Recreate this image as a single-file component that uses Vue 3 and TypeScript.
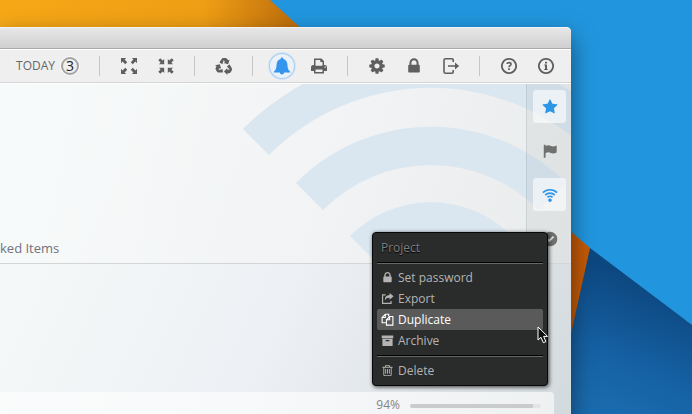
<script setup lang="ts">
import { ref } from 'vue'

interface Shape {
  d: string
  stroke?: number
  transform?: string
}

interface Icon {
  box: number
  shapes: Shape[]
}

interface Action {
  icon: string
  label: string
}

const outward = 'M1 1h5.200L4.600 2.600 7.200 5.200 5.200 7.200 2.600 4.600 1 6.200z'
const inward = 'M7.200 7.200H2L3.600 5.600 1.300 3.300 3.300 1.300 5.600 3.600 7.200 2z'
const recycleArm =
  'M4.4 5.6 6.6 2Q7.2 1 8.4 1H10.6Q11.6 1 12.2 1.9L13.1 3.3 14.6 2.5 13.2 7.2 8.6 6.1 10 5.2 8.7 3.1 7.4 7.3z'

const fourWays = (d: string): Shape[] =>
  [0, 90, 180, 270].map((angle) => ({ d, transform: `rotate(${angle} 9 9)` }))

const icons: Record<string, Icon> = {
  expand: { box: 18, shapes: fourWays(outward) },
  collapse: { box: 18, shapes: fourWays(inward) },
  recycle: {
    box: 18,
    shapes: [0, 120, 240].map((angle) => ({ d: recycleArm, transform: `rotate(${angle} 9 9.6)` })),
  },
  bell: {
    box: 18,
    shapes: [
      {
        d: 'M9 .6c.8 0 1.3.5 1.3 1.3 2.7.6 4 2.8 4.1 5.6.1 4 .9 5.600 2.800 7.200v.8H.8v-.8c1.900-1.600 2.700-3.200 2.800-7.200.1-2.800 1.400-5 4.100-5.600C7.700 1.100 8.200.6 9 .6zM6.900 15.500h4.200a2.100 2.100 0 0 1-4.200 0z',
      },
    ],
  },
  print: {
    box: 18,
    shapes: [
      {
        d: 'M4 1.500h7.500L14 4v4h.8A2.200 2.200 0 0 1 17 10.200V14h-3v2.500H4V14H1v-3.800A2.200 2.200 0 0 1 3.200 8H4zM5.500 3v5.800h7V5H10.300V3zM5.500 12.500V15h7v-2.500zM14.500 9.500v1.200h1.200V9.500z',
      },
    ],
  },
  cog: {
    box: 1792,
    shapes: [
      {
        d: 'M1152 896q0-106-75-181t-181-75-181 75-75 181 75 181 181 75 181-75 75-181zm512-109v222q0 12-8 23t-20 13l-185 28q-19 54-39 91 35 50 107 138 10 12 10 25t-9 23q-27 37-99 108t-94 71q-12 0-26-9l-138-108q-44 23-91 38-16 136-29 186-7 28-36 28h-222q-14 0-24.500-8.500t-11.500-21.500l-28-184q-49-16-90-37l-141 107q-10 9-25 9-14 0-25-11-126-114-165-168-7-10-7-23 0-12 8-23 15-21 51-66.500t54-70.500q-27-50-41-99l-183-27q-13-2-21-12.500t-8-23.500v-222q0-12 8-23t19-13l186-28q14-46 39-92-40-57-107-138-10-12-10-24 0-10 9-23 26-36 98.500-107.500t94.500-71.500q13 0 26 10l138 107q44-23 91-38 16-136 29-186 7-28 36-28h222q14 0 24.500 8.500t11.500 21.500l28 184q49 16 90 37l142-107q9-9 24-9 13 0 25 10 129 119 165 170 7 8 7 22 0 12-8 23-15 21-51 66.500t-54 70.500q26 50 41 98l183 28q13 2 21 12.500t8 23.500z',
      },
    ],
  },
  lock: {
    box: 1792,
    shapes: [
      {
        d: 'M640 768h512v-192q0-106-75-181t-181-75-181 75-75 181v192zm832 96v576q0 40-28 68t-68 28h-960q-40 0-68-28t-28-68v-576q0-40 28-68t68-28h32v-192q0-184 132-316t316-132 316 132 132 316v192h32q40 0 68 28t28 68z',
      },
    ],
  },
  exit: {
    box: 18,
    shapes: [
      { d: 'M11.200 5V3Q11.200 1.800 10 1.800H3.500Q2 1.800 2 3.300V14.700Q2 16.200 3.500 16.200H10Q11.200 16.200 11.200 15V13', stroke: 1.6 },
      { d: 'M6 8.200h7V5.400L17.200 9 13 12.600V9.800H6z' },
    ],
  },
  help: {
    box: 18,
    shapes: [
      { d: 'M9 1.900a7.100 7.100 0 1 0 .01 0z', stroke: 1.8 },
      { d: 'M6.800 6.800Q7.300 5.600 9 5.600q2 0 2 1.600 0 1-1.100 1.600-.9.500-.9 1.500', stroke: 1.6 },
      { d: 'M8.100 11.300h1.800V13H8.100z' },
    ],
  },
  info: {
    box: 18,
    shapes: [
      { d: 'M9 1.900a7.100 7.100 0 1 0 .01 0z', stroke: 1.8 },
      { d: 'M8 4.800h2v1.700H8zM7.300 7.500H10v4.400h.8V13H7.200v-1.100H8V8.600h-.7z' },
    ],
  },
  star: {
    box: 1792,
    shapes: [
      {
        d: 'M1728 647q0 22-26 48l-363 354 86 500q1 7 1 20 0 21-10.500 35.500t-30.500 14.500q-19 0-40-12l-449-236-449 236q-22 12-40 12-21 0-31.500-14.500t-10.500-35.500q0-6 2-20l86-500-364-354q-25-27-25-48 0-37 56-46l502-73 225-455q19-41 49-41t49 41l225 455 502 73q56 9 56 46z',
      },
    ],
  },
  flag: {
    box: 18,
    shapes: [{ d: 'M2 2h2v1.300C6 2.200 8 2.300 9.600 3.200c2 1 4 .9 6.900-.4v7.800c-2.600 1.400-5.100 1.400-7.100.5-1.800-.9-3.400-.9-5.400.3V16.500H2z' }],
  },
  wifi: {
    box: 18,
    shapes: [
      { d: 'M1 6.400a11.300 11.300 0 0 1 16 0', stroke: 1.9 },
      { d: 'M3.600 9.100a7.600 7.600 0 0 1 10.800 0', stroke: 1.9 },
      { d: 'M6.200 11.700a4 4 0 0 1 5.600 0', stroke: 1.9 },
      { d: 'M9 12.800a2 2 0 1 0 .01 0z' },
    ],
  },
  check: {
    box: 18,
    shapes: [{ d: 'M9 .8a8.200 8.200 0 1 0 .01 0zM4.500 9.200 6 7.700 8 9.700 12.300 5.500 13.800 7 8 12.700z' }],
  },
  share: {
    box: 14,
    shapes: [
      { d: 'M5 3H1.700V12.300H10.800V9.600', stroke: 1.3 },
      { d: 'M9.200 1 13.600 4.700 9.200 8.300V6.200C6.800 6.100 5.300 6.800 4.300 9 4 5.600 5.800 3.300 9.200 3.200z' },
    ],
  },
  copy: {
    box: 14,
    shapes: [
      { d: 'M5.600 10.500H1.200V4.800L4.600 1.300H8.300V3.800M4.600 1.300V4.800H1.200', stroke: 1.2 },
      { d: 'M9.300 3.800H12.800V13H5.900V7.300zM9.300 3.800V7.300H5.900', stroke: 1.2 },
    ],
  },
  archive: {
    box: 14,
    shapes: [{ d: 'M.8 1.500h12.400v3H.8zM1.500 5.200h11V12.800h-11zM5 6.400v1.400h4V6.400z' }],
  },
  trash: {
    box: 1792,
    shapes: [
      {
        d: 'M704 736v576q0 14-9 23t-23 9h-64q-14 0-23-9t-9-23v-576q0-14 9-23t23-9h64q14 0 23 9t9 23zm256 0v576q0 14-9 23t-23 9h-64q-14 0-23-9t-9-23v-576q0-14 9-23t23-9h64q14 0 23 9t9 23zm256 0v576q0 14-9 23t-23 9h-64q-14 0-23-9t-9-23v-576q0-14 9-23t23-9h64q14 0 23 9t9 23zm128 724v-948h-896v948q0 22 7 40.500t14.500 27 10.500 8.500h832q3 0 10.500-8.500t14.500-27 7-40.500zm-672-1076h448l-48-117q-7-9-17-11h-317q-10 2-17 11zm928 32v64q0 14-9 23t-23 9h-96v948q0 83-47 143.500t-113 60.500h-832q-66 0-113-58.500t-47-141.500v-952h-96q-14 0-23-9t-9-23v-64q0-14 9-23t23-9h309l70-167q15-37 54-63t79-26h320q40 0 79 26t54 63l70 167h309q14 0 23 9t9 23z',
      },
    ],
  },
}

const toolbar: Action[][] = [
  [
    { icon: 'expand', label: 'Expand' },
    { icon: 'collapse', label: 'Collapse' },
  ],
  [{ icon: 'recycle', label: 'Recycle' }],
  [
    { icon: 'bell', label: 'Notifications' },
    { icon: 'print', label: 'Print' },
  ],
  [
    { icon: 'cog', label: 'Settings' },
    { icon: 'lock', label: 'Lock' },
    { icon: 'exit', label: 'Sign out' },
  ],
  [
    { icon: 'help', label: 'Help' },
    { icon: 'info', label: 'About' },
  ],
]

const markers: Action[] = [
  { icon: 'star', label: 'Favourite' },
  { icon: 'flag', label: 'Flag' },
  { icon: 'wifi', label: 'Shared' },
  { icon: 'check', label: 'Done' },
]

const menu: Action[][] = [
  [
    { icon: 'lock', label: 'Set password' },
    { icon: 'share', label: 'Export' },
    { icon: 'copy', label: 'Duplicate' },
    { icon: 'archive', label: 'Archive' },
  ],
  [{ icon: 'trash', label: 'Delete' }],
]

const notifying = ref(true)
const active = ref<string[]>(['star', 'wifi'])
const highlighted = ref('Duplicate')
const progress = ref(94)

function toggleMarker(name: string) {
  active.value = active.value.includes(name)
    ? active.value.filter((item) => item !== name)
    : [...active.value, name]
}
</script>

<template>
  <div class="desktop">
    <svg class="wallpaper" viewBox="0 0 692 414" preserveAspectRatio="xMidYMid slice" aria-hidden="true">
      <defs>
        <linearGradient id="amber" gradientUnits="userSpaceOnUse" x1="0" y1="0" x2="290" y2="30">
          <stop offset="0" stop-color="#f6a817" />
          <stop offset=".7" stop-color="#ee9e14" />
          <stop offset="1" stop-color="#c0700c" />
        </linearGradient>
        <linearGradient id="deep" gradientUnits="userSpaceOnUse" x1="640" y1="280" x2="590" y2="400">
          <stop offset="0" stop-color="#0d4780" />
          <stop offset=".6" stop-color="#1560a2" />
          <stop offset="1" stop-color="#1a6bae" />
        </linearGradient>
      </defs>
      <rect width="692" height="414" fill="#2196de" />
      <path d="M0 0H270L360 82H0z" fill="url(#amber)" />
      <path d="M590 248 692 325V414H560V248z" fill="url(#deep)" />
      <path d="M540 205 590 248 571 334 540 414z" fill="#c35a08" />
    </svg>

    <main class="window">
      <div class="titlebar"></div>

      <nav class="toolbar" aria-label="Project tools">
        <button class="today" type="button">
          TODAY
          <span class="count">3</span>
        </button>
        <template v-for="(group, index) in toolbar" :key="index">
          <span class="divider"></span>
          <button
            v-for="item in group"
            :key="item.icon"
            class="tool"
            :class="{ ringing: item.icon === 'bell' && notifying }"
            type="button"
            :aria-label="item.label"
          >
            <svg class="icon" :viewBox="`0 0 ${icons[item.icon].box} ${icons[item.icon].box}`">
              <path
                v-for="(shape, i) in icons[item.icon].shapes"
                :key="i"
                :d="shape.d"
                :transform="shape.transform"
                :class="{ line: shape.stroke }"
                :stroke-width="shape.stroke"
              />
            </svg>
          </button>
        </template>
      </nav>

      <section class="header">
        <svg class="watermark" width="380" height="179" viewBox="0 0 380 179" aria-hidden="true">
          <g transform="translate(240 233)">
            <path d="M-188-188A266 266 0 0 1 188-188L162-162A229 229 0 0 0-162-162z" />
            <path d="M-135-134A190 190 0 0 1 135-134L108-107A152 152 0 0 0-108-107z" />
            <path d="M-81-81A114 114 0 0 1 81-81L54-54A76 76 0 0 0-54-54z" />
          </g>
        </svg>
        <h2 class="heading">ked Items</h2>
        <aside class="markers">
          <button
            v-for="item in markers"
            :key="item.icon"
            class="marker"
            :class="{ on: active.includes(item.icon) }"
            type="button"
            :aria-label="item.label"
            @click="toggleMarker(item.icon)"
          >
            <svg class="icon" :viewBox="`0 0 ${icons[item.icon].box} ${icons[item.icon].box}`">
              <path
                v-for="(shape, i) in icons[item.icon].shapes"
                :key="i"
                :d="shape.d"
                :class="{ line: shape.stroke }"
                :stroke-width="shape.stroke"
              />
            </svg>
          </button>
        </aside>
      </section>

      <section class="board">
        <div class="card">
          <label class="percent" for="completion">{{ progress }}%</label>
          <progress id="completion" class="bar" max="100" :value="progress"></progress>
        </div>
      </section>

      <div class="menu" role="menu" aria-labelledby="menu-title">
        <div id="menu-title" class="menu-title">Project</div>
        <template v-for="(group, index) in menu" :key="index">
          <div class="rule" role="separator"></div>
          <button
            v-for="item in group"
            :key="item.label"
            class="entry"
            :class="{ hovered: highlighted === item.label }"
            type="button"
            role="menuitem"
            @mouseenter="highlighted = item.label"
          >
            <svg class="glyph" :viewBox="`0 0 ${icons[item.icon].box} ${icons[item.icon].box}`">
              <path
                v-for="(shape, i) in icons[item.icon].shapes"
                :key="i"
                :d="shape.d"
                :class="{ line: shape.stroke }"
                :stroke-width="shape.stroke"
              />
            </svg>
            {{ item.label }}
          </button>
        </template>
        <svg class="pointer" width="12" height="18" viewBox="0 0 12 18" aria-hidden="true">
          <path d="M1 1V14L4 11.300 6.300 16.700 8.900 15.600 6.600 10.400H10.600z" />
        </svg>
      </div>
    </main>
  </div>
</template>

<style>
body {
  margin: 0;
}
</style>

<style scoped>
.desktop {
  position: relative;
  display: flex;
  box-sizing: border-box;
  min-height: 100vh;
  padding: 27px 121px 0 0;
  overflow: hidden;
  font-family: 'Open Sans', 'Noto Sans', sans-serif;
  font-size: 12px;
}

.wallpaper {
  position: absolute;
  inset: 0;
  width: 100%;
  height: 100%;
}

.window {
  position: relative;
  display: flex;
  flex: 1;
  flex-direction: column;
  min-width: 0;
  border-radius: 0 5px 0 0;
  background: linear-gradient(115deg, #f4f8f8 20%, #edf0f4 55%, #d3dadd);
  box-shadow: 0 10px 24px rgba(0, 0, 0, 0.5);
}

button {
  margin: 0;
  padding: 0;
  border: 0;
  background: none;
  color: inherit;
  font: inherit;
}

.icon path,
.glyph path,
.watermark path {
  fill: currentColor;
  fill-rule: evenodd;
}

.icon .line,
.glyph .line {
  fill: none;
  stroke: currentColor;
}

.titlebar {
  height: 21px;
  border-bottom: 1px solid #aaa;
  border-radius: 0 5px 0 0;
  background: linear-gradient(#e8e8e8, #cfcfcf);
  box-shadow: inset 0 1px #f3f3f3;
}

.toolbar {
  display: flex;
  align-items: center;
  justify-content: flex-end;
  gap: 13px;
  height: 33px;
  padding-right: 13px;
  border-bottom: 1px solid #d4d4d4;
  background: #efefef;
  box-shadow: inset 0 1px #fff, 0 1px #fff;
  color: #5f5f5f;
}

.today {
  display: flex;
  align-items: center;
  gap: 6px;
  margin-right: 4px;
  color: #666;
}

.count {
  box-sizing: border-box;
  width: 18px;
  height: 18px;
  border: 2px solid #a5a5a5;
  border-radius: 50%;
  box-shadow: 0 0 0 1px #fafafa;
  color: #222;
  font-size: 14px;
  line-height: 14px;
  text-align: center;
}

.divider {
  width: 1px;
  height: 20px;
  margin: 0 4px 0 3px;
  background: #c6c6c6;
}

.tool {
  display: grid;
  flex: none;
  place-items: center;
  width: 24px;
  height: 24px;
  border-radius: 50%;
}

.ringing {
  box-shadow: 0 0 0 1px #a9cdf0, 0 0 0 2px #d5e6f6;
  background: #eaf1f8;
  color: #3494ee;
}

.icon {
  width: 18px;
  height: 18px;
}

.header {
  position: relative;
  display: flex;
  align-items: flex-end;
  justify-content: space-between;
  height: 179px;
  margin-top: 1px;
  border-bottom: 1px solid #d3d6d7;
  overflow: hidden;
  background: linear-gradient(100deg, rgba(255, 255, 255, 0.3), rgba(242, 242, 241, 0.7));
}

.watermark {
  position: absolute;
  top: 0;
  right: 0;
  color: #dae6f0;
}

.heading {
  margin: 0 0 6px;
  color: #71717f;
  font-size: 13px;
  font-weight: 500;
  line-height: 18px;
}

.markers {
  position: relative;
  display: flex;
  box-sizing: border-box;
  flex-direction: column;
  gap: 11px;
  width: 45px;
  height: 100%;
  padding: 6px 5px 0 6px;
  border-left: 1px solid rgba(120, 140, 150, 0.2);
  background: rgba(150, 160, 165, 0.13);
  color: #707070;
}

.marker {
  display: grid;
  place-items: center;
  height: 33px;
  border-radius: 3px;
}

.marker .icon {
  width: 16px;
  height: 16px;
}

.marker.on {
  background: rgba(255, 255, 255, 0.6);
  color: #2d96e6;
}

.board {
  display: flex;
  flex: 1;
  flex-direction: column;
  justify-content: flex-end;
  padding-right: 17px;
}

.card {
  display: flex;
  align-items: center;
  justify-content: flex-end;
  gap: 10px;
  height: 22px;
  padding: 0 13px 0 0;
  border-radius: 0 4px 0 0;
  background: rgba(255, 255, 255, 0.6);
}

.percent {
  padding-top: 3px;
  color: #858585;
}

.bar {
  width: 131px;
  height: 4px;
  margin-top: 6px;
  border: 0;
  border-radius: 2px;
  overflow: hidden;
  appearance: none;
  background: #e2e4e5;
}

.bar::-webkit-progress-bar {
  background: #e2e4e5;
}

.bar::-webkit-progress-value {
  background: #c9cbcc;
}

.menu {
  position: absolute;
  top: 205px;
  right: 23px;
  display: flex;
  box-sizing: border-box;
  flex-direction: column;
  width: 176px;
  padding: 4px;
  border: 1px solid #080808;
  border-radius: 4px;
  background: #2a2b2b;
  box-shadow: 1px 1px 4px rgba(0, 0, 0, 0.75);
  color: #b4b4b4;
  font-weight: 500;
  line-height: 21px;
  text-shadow: 0 1px 1px #000;
}

.menu-title {
  padding-left: 4px;
  color: #7d7d7d;
}

.rule {
  height: 1px;
  margin: 4px 0 3px;
  border-bottom: 1px solid #676767;
  background: #000;
}

.entry {
  display: flex;
  align-items: center;
  gap: 4px;
  height: 21px;
  padding-left: 4px;
  border-radius: 2px;
}

.hovered {
  background: #5a5a5a;
  color: #fff;
}

.glyph {
  width: 13px;
  height: 13px;
}

.pointer {
  position: absolute;
  top: 93px;
  right: -2px;
}

.pointer path {
  fill: #111;
  stroke: #fff;
}
</style>
